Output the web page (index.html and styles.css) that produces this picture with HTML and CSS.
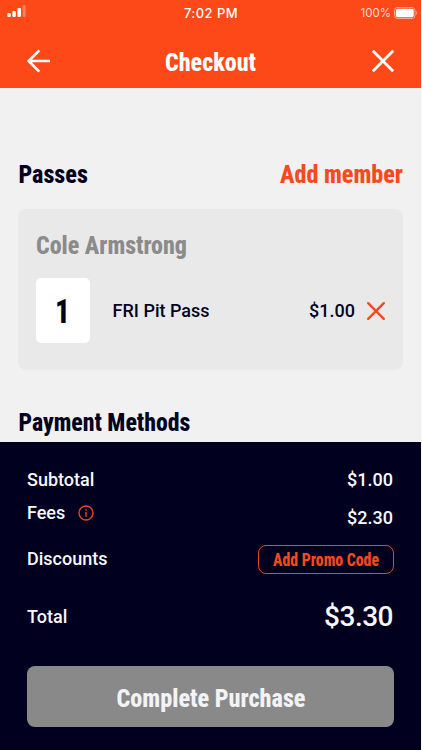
FILE: index.html
```html
<!DOCTYPE html>
<html lang="en">
<head>
<meta charset="utf-8">
<title>Checkout</title>
<link rel="stylesheet" href="styles.css">
</head>
<body>
<div class="screen">
  <header class="header">
    <div class="status">
      <svg class="signal" width="20" height="12" viewBox="0 0 20 12"><rect x="0.4" y="8" width="3.4" height="4" rx="1"/><rect x="5.4" y="6" width="3.4" height="6" rx="1"/><rect x="10.4" y="3" width="3.6" height="9" rx="1"/><rect x="15.6" y="0" width="3" height="12" rx="1" opacity=".3"/></svg>
      <span class="time">7:02 PM</span>
      <span class="battery">100%
        <svg width="24" height="12" viewBox="0 0 24 12"><rect x=".5" y=".5" width="20.5" height="11" rx="3" fill="none" stroke="#fff" stroke-opacity=".5"/><rect x="1.8" y="1.8" width="17.9" height="8.4" rx="1.8" fill="#fff"/><path d="M22.2 4v4q1-.6 1-2t-1-2" fill="#fff" opacity=".5"/></svg>
      </span>
    </div>
    <nav class="nav">
      <svg width="24" height="24" viewBox="0 0 24 24" fill="none" stroke="#fff" stroke-width="2.6"><path d="M23 12H2M12.3 1.3 1.7 12l10.6 10.7"/></svg>
      <svg class="display" width="93" height="32"><text x="0" y="25.5" textLength="91" lengthAdjust="spacingAndGlyphs">Checkout</text></svg>
      <svg width="24" height="24" viewBox="0 0 24 24" fill="none" stroke="#fff" stroke-width="2.8"><path d="m1.8 1.8 20.4 20.4m0-20.4L1.8 22.2"/></svg>
    </nav>
  </header>
  <main class="content">
    <div class="section-head">
      <svg class="display navy" width="72" height="32"><text x="-0.6" y="25.3" textLength="69.5" lengthAdjust="spacingAndGlyphs">Passes</text></svg>
      <svg class="display orange" width="124" height="32"><text x="1" y="25.3" textLength="123" lengthAdjust="spacingAndGlyphs">Add member</text></svg>
    </div>
    <section class="card">
      <svg class="display gray" width="152" height="34"><text x="0" y="25" textLength="151" lengthAdjust="spacingAndGlyphs">Cole Armstrong</text></svg>
      <div class="pass">
        <div class="quantity"><svg class="display navy one" width="16" height="34"><text x="0" y="29" textLength="15" lengthAdjust="spacingAndGlyphs">1</text></svg></div>
        <span class="pass-name">FRI Pit Pass</span>
        <span class="pass-price">$1.00</span>
        <svg width="18" height="18" viewBox="0 0 18 18" fill="none" stroke="#f54a1e" stroke-width="2.4" stroke-linecap="round"><path d="m1.2 1.2 15.6 15.6m0-15.6L1.2 16.8"/></svg>
      </div>
    </section>
    <svg class="display navy payment" width="174" height="34"><text x="-0.6" y="25" textLength="172" lengthAdjust="spacingAndGlyphs">Payment Methods</text></svg>
  </main>
  <footer class="summary">
    <div class="row subtotal"><span>Subtotal</span><span>$1.00</span></div>
    <div class="row fees"><span class="fee-label">Fees <svg width="16" height="16" viewBox="0 0 16 16" fill="none" stroke="#e8452b" stroke-width="1.4"><circle cx="8" cy="8" r="7"/><path d="M8 7v4.8M8 4.2v1.5"/></svg></span><span class="fee-value">$2.30</span></div>
    <div class="row discounts"><span>Discounts</span>
      <div class="promo"><svg class="display orange small" width="108" height="24"><text x="1" y="19" textLength="106" lengthAdjust="spacingAndGlyphs">Add Promo Code</text></svg></div>
    </div>
    <div class="row total"><span>Total</span><span class="total-value">$3.30</span></div>
    <div class="complete"><svg class="display pale" width="190" height="34"><text x="0.5" y="27" textLength="189" lengthAdjust="spacingAndGlyphs">Complete Purchase</text></svg></div>
  </footer>
</div>
</body>
</html>
```
FILE: styles.css
```css
* { box-sizing: border-box; }
body { margin: 0; background: #f8f8fa; font-family: Roboto, sans-serif; }
svg { display: block; flex: none; }
.screen { width: 421px; height: 750px; display: flex; flex-direction: column; background: #f1f1f1; overflow: hidden; }
.header { height: 88px; background: #fd4818; color: #fff; flex: none; }
.status { height: 24px; display: grid; grid-template-columns: 1fr auto 1fr; align-items: center; padding: 0 3px 0 7px; }
.signal { fill: #fff; align-self: start; margin-top: 5px; }
.time { font: 500 13px/24px Inter, sans-serif; letter-spacing: .45px; margin-right: 3px; }
.battery { display: flex; justify-content: flex-end; align-items: center; gap: 3px; font: 400 11.5px/24px Inter, sans-serif; color: #ffd9ce; padding-top: 1px; }
.nav { height: 64px; display: flex; justify-content: space-between; align-items: center; padding: 0 26px 0 27px; }
.nav > svg { position: relative; top: 5px; }
.display { font-family: Roboto, sans-serif; font-size: 26.5px; font-weight: 800; font-stretch: 75%; fill: #fff; overflow: visible; }
.navy { fill: #03031f; }
.orange { fill: #f54a1e; }
.gray { fill: #8b8b8b; }
.pale { fill: #f3f3f6; }
.one { font-size: 34px; }
.small { font-size: 17.5px; }
.content { height: 354px; padding: 70px 18px 0 19px; flex: none; }
.section-head { display: flex; justify-content: space-between; }
.card { width: 385px; height: 161px; margin: 19px 0 0 -1px; padding: 20px 18px 0; background: #e9e9e9; border-radius: 8px; }
.pass { display: flex; align-items: center; height: 65px; margin-top: 15px; color: #03031f; font-size: 18px; font-weight: 500; }
.quantity { width: 54px; height: 65px; background: #fff; border-radius: 5px; display: flex; align-items: center; justify-content: center; }
.pass-name { margin-left: 22.6px; }
.pass-price { margin-left: auto; margin-right: 12px; }
.payment { margin-top: 36px; }
.summary { flex: 1; background: #01001f; color: #f7f7fc; padding: 23px 27px 0; font-size: 18px; font-weight: 500; line-height: 30px; }
.row { display: flex; justify-content: space-between; align-items: center; }
.row > span:last-child { margin-right: 1px; }
.subtotal { height: 30px; }
.fees { height: 38px; margin-top: 3px; align-items: flex-start; }
.fee-label { display: flex; align-items: center; gap: 13px; }
.fee-value { margin-top: 5px; }
.discounts { height: 30px; margin-top: 8px; }
.promo { width: 136px; height: 29px; border: 1px solid #e8452b; border-radius: 8px; display: flex; align-items: center; justify-content: center; }
.total { height: 36px; margin-top: 25px; }
.total-value { font-size: 28px; letter-spacing: -.5px; }
.complete { height: 61px; margin-top: 31px; background: #898989; border-radius: 8px; display: flex; align-items: center; justify-content: center; }
```
